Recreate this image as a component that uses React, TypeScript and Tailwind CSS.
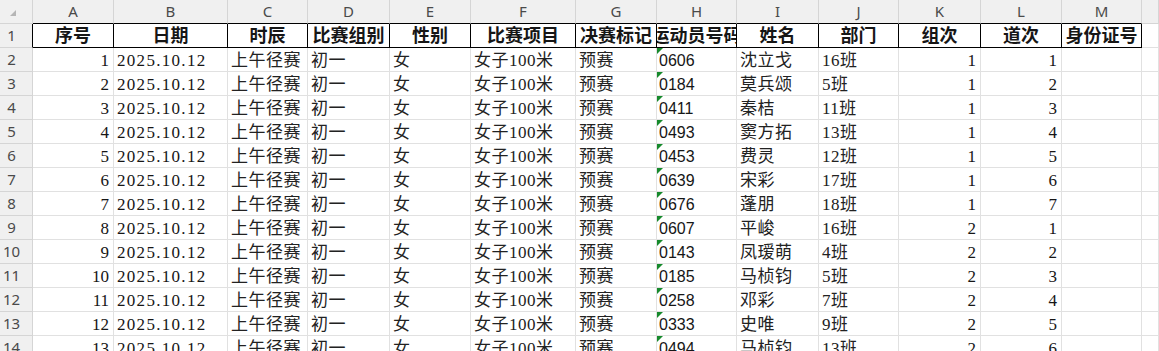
// Spreadsheet view: 女子100米 heat assignments (Excel-like grid)

type Entry = { no: string; name: string; cls: string; group: number; lane: number };

const entries: Entry[] = [
  { no: '0606', name: '沈立戈', cls: '16班', group: 1, lane: 1 },
  { no: '0184', name: '莫兵颂', cls: '5班', group: 1, lane: 2 },
  { no: '0411', name: '秦桔', cls: '11班', group: 1, lane: 3 },
  { no: '0493', name: '窦方拓', cls: '13班', group: 1, lane: 4 },
  { no: '0453', name: '费灵', cls: '12班', group: 1, lane: 5 },
  { no: '0639', name: '宋彩', cls: '17班', group: 1, lane: 6 },
  { no: '0676', name: '蓬朋', cls: '18班', group: 1, lane: 7 },
  { no: '0607', name: '平峻', cls: '16班', group: 2, lane: 1 },
  { no: '0143', name: '凤瑷萌', cls: '4班', group: 2, lane: 2 },
  { no: '0185', name: '马桢钧', cls: '5班', group: 2, lane: 3 },
  { no: '0258', name: '邓彩', cls: '7班', group: 2, lane: 4 },
  { no: '0333', name: '史唯', cls: '9班', group: 2, lane: 5 },
  { no: '0494', name: '马桢钧', cls: '13班', group: 2, lane: 6 },
];

const letters = ['A', 'B', 'C', 'D', 'E', 'F', 'G', 'H', 'I', 'J', 'K', 'L', 'M'];
const titles = ['序号', '日期', '时辰', '比赛组别', '性别', '比赛项目', '决赛标记', '运动员号码', '姓名', '部门', '组次', '道次', '身份证号'];

const grid = 'border-r border-b border-[#e1e1e1] h-[24px] overflow-hidden flex items-center whitespace-nowrap';
const head = 'bg-[#f0f0f0] border-r border-b border-[#d5d5d5] h-[24px] flex items-center justify-center text-[15px] text-[#4a4a4a] font-["Noto_Sans","Liberation_Sans",sans-serif]';

function Left({ children }: { children: React.ReactNode }) {
  return <div className={`${grid} pl-[3px] pt-[2px] tracking-[0.5px] text-[#222]`}>{children}</div>;
}

function Right({ children }: { children: React.ReactNode }) {
  return <div className={`${grid} justify-end pr-[4px] pt-[2px]`}>{children}</div>;
}

function RowHead({ n, className = '' }: { n: number; className?: string }) {
  return (
    <div className={`${head} justify-start! ${className}`}>
      <span className="w-[23px] text-center">{n}</span>
    </div>
  );
}

export default function App() {
  return (
    <div className="h-[351px] w-[1159px] overflow-hidden bg-white">
      <div className="grid grid-cols-[33px_81px_114px_80px_82px_81px_105px_81px_80px_82px_80px_82px_81px_80px_1fr] text-[17px] text-[#161616] font-['Liberation_Serif','Noto_Sans_CJK_SC',serif]">
        {/* column letters */}
        <div className={`${head} relative`}>
          <svg className="absolute left-[9px] top-[9px]" width="8" height="8" viewBox="0 0 8 8">
            <polygon points="7,1 7,7 1,7" fill="#b5b5b5" />
          </svg>
        </div>
        {letters.map(l => (
          <div key={l} className={`${head} border-b-black`}>{l}</div>
        ))}
        <div className={head} />

        {/* row 1: titles */}
        <RowHead n={1} className="border-r-black" />
        {titles.map(t => (
          <div key={t} className="border-r border-b border-black h-[24px] overflow-hidden flex items-center justify-center whitespace-nowrap font-bold text-[18px] pt-[1px]">
            {t}
          </div>
        ))}
        <div className={grid} />

        {/* data rows */}
        {entries.map((e, i) => (
          <Row key={i} idx={i} e={e} />
        ))}
      </div>
    </div>
  );
}

function Row({ idx, e }: { idx: number; e: Entry }) {
  return (
    <>
      <RowHead n={idx + 2} />
      <Right>{idx + 1}</Right>
      <Left><span className="tracking-[1.3px] text-[#161616]">2025.10.12</span></Left>
      <Left>上午径赛</Left>
      <Left>初一</Left>
      <Left>女</Left>
      <Left>女子100米</Left>
      <Left>预赛</Left>
      <div className={`${grid} relative pl-[2px] pt-[2px] font-['Liberation_Sans','Noto_Sans_CJK_SC',sans-serif] text-[16px]`}>
        <span className="absolute left-0 top-0 w-0 h-0 border-t-[6px] border-t-[#168a2c] border-r-[6px] border-r-transparent" />
        {e.no}
      </div>
      <Left>{e.name}</Left>
      <Left>{e.cls}</Left>
      <Right>{e.group}</Right>
      <Right>{e.lane}</Right>
      <div className={grid} />
      <div className={grid} />
    </>
  );
}
